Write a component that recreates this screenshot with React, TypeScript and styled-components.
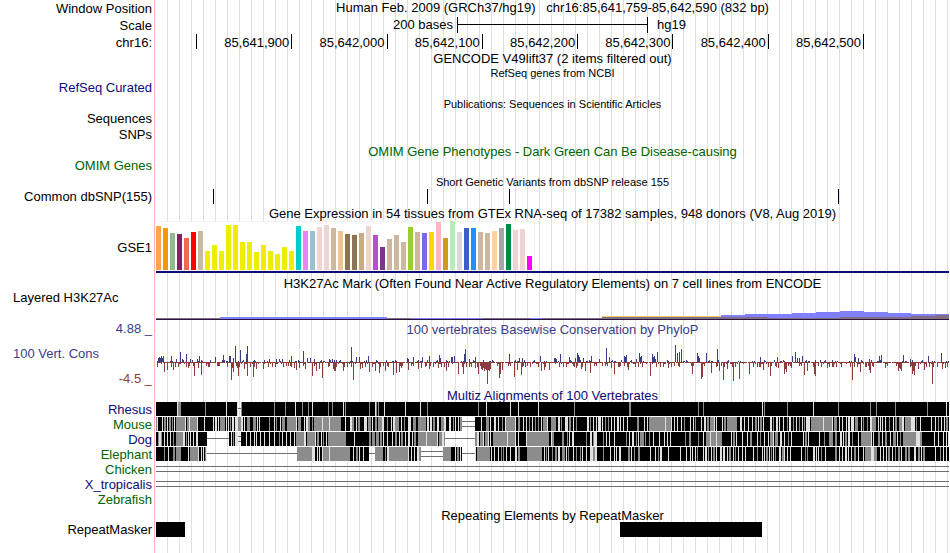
import React from "react";
import styled, { createGlobalStyle } from "styled-components";

const GlobalStyle = createGlobalStyle`
  * { box-sizing: border-box; }
  body {
    margin: 0;
    background: #fff;
    color: #000;
    font-family: "Liberation Sans", Arial, sans-serif;
    font-size: 13px;
  }
`;

const NAVY = "#0c0c78";
const GREEN = "#006400";
const BLUE = "#3c3c8c";
const RED = "#8c3c3c";

const Browser = styled.main`
  display: grid;
  grid-template-columns: 155px minmax(0, 1fr);
  grid-auto-rows: max-content;
  min-height: 100vh;
  overflow: hidden;
  background:
    linear-gradient(#ffb4b4, #ffb4b4) 154px 0 / 1px 100% no-repeat,
    repeating-linear-gradient(90deg, transparent 0 11px, #dcdcf8 11px 12px) 156px 0 / 100% 100% no-repeat;
`;

const Row = styled.section<{ $h: number }>`
  display: grid;
  grid-template-columns: subgrid;
  grid-column: 1 / -1;
  height: ${(p) => p.$h}px;
`;

const Label = styled.div<{ $color?: string; $left?: boolean; $top?: boolean }>`
  display: flex;
  align-items: center;
  align-self: ${(p) => (p.$top ? "start" : "stretch")};
  justify-content: ${(p) => (p.$left ? "flex-start" : "flex-end")};
  padding: ${(p) => (p.$left ? "0 0 0 13px" : "0 3px 0 0")};
  color: ${(p) => p.$color ?? "#000"};
  line-height: 14px;
  white-space: pre;
`;

const Track = styled.div`
  grid-column: 2;
  margin: 0 1px;
  min-width: 0;
`;

const Title = styled.h2<{ $color?: string; $small?: boolean; $h?: number }>`
  display: flex;
  align-items: center;
  justify-content: center;
  height: ${(p) => p.$h ?? 16}px;
  margin: 0;
  padding-top: 2px;
  color: ${(p) => p.$color ?? "#000"};
  font-size: ${(p) => (p.$small ? 11 : 13)}px;
  font-weight: 400;
  line-height: 14px;
  white-space: pre;
`;

const ScaleRow = styled.div`
  display: grid;
  grid-template-columns: 301fr 191fr 301fr;
  height: 16px;
  line-height: 15px;
`;

const ScaleStart = styled.span`
  padding-right: 4px;
  text-align: right;
`;

const ScaleEnd = styled.span`
  padding-left: 9px;
`;

const ScaleBar = styled.span`
  height: 16px;
  border: solid #000;
  border-width: 0 1px;
  background: linear-gradient(#000, #000) 0 7px / 100% 1px no-repeat;
`;

const Ruler = styled.div`
  display: grid;
  grid-template-columns: 287fr repeat(7, 667fr) 595fr;
  grid-template-rows: 15px;
`;

const RulerCell = styled.span`
  padding-right: 2px;
  border-right: 1px solid #000;
  line-height: 18px;
  text-align: right;
`;

const Drawing = styled.svg<{ $h: number }>`
  display: block;
  width: 100%;
  height: ${(p) => p.$h}px;
  shape-rendering: crispEdges;
`;

const Expression = styled.div`
  display: flex;
  flex-direction: column;
  height: 52px;
  border-bottom: 2px solid ${NAVY};
`;

const BarBox = styled.div`
  display: flex;
  align-items: flex-end;
  align-self: flex-start;
  gap: 2px;
  height: 50px;
  padding: 0 2px 0 0;
  border: solid #f3f3f3;
  border-width: 1px 1px 1px 0;
  background: #fff;
`;

const TissueBar = styled.span<{ $h: number; $c: string }>`
  width: 5px;
  height: ${(p) => p.$h}px;
  background: ${(p) => p.$c};
`;

const ConsLabels = styled.div`
  display: flex;
  flex-direction: column;
  justify-content: space-between;
  padding: 1px 0;
`;

const TAN = "#cdb79e";
const YEL = "#eeee00";
const PINK = "#eed5d2";

const tissues: [number, string][] = [
  [44, "#ffa54f"], [42, "#ee9a00"], [37, "#8fbc8f"], [36, "#8b1c62"], [32, "#ee6a50"], [38, "#ff0000"], [39, TAN],
  [19, YEL], [25, YEL], [19, YEL], [45, YEL], [45, YEL], [28, YEL], [28, YEL], [18, YEL], [25, YEL], [19, YEL],
  [16, YEL], [23, YEL], [19, YEL], [44, "#00cdcd"], [39, "#ee82ee"], [39, "#9ac0cd"], [43, PINK], [45, PINK],
  [42, TAN], [39, "#eec591"], [36, "#8b7355"], [35, "#8b7355"], [37, "#cdaa7d"], [44, PINK], [35, "#b452cd"],
  [23, "#7a378b"], [31, TAN], [35, TAN], [28, TAN], [43, "#9acd32"], [38, TAN], [37, "#7a67ee"], [38, "#ffd700"],
  [48, "#ffb6c1"], [32, "#cd9b1d"], [49, "#b4eeb4"], [38, "#d9d9d9"], [42, "#3a5fcd"], [42, "#1e90ff"], [38, TAN],
  [37, TAN], [39, "#ffd39b"], [42, "#a6a6a6"], [46, "#008b45"], [40, PINK], [41, PINK], [14, "#ff00ff"],
];

/* Every drawing uses a 793-unit wide canvas whose first column is 156. */
const X0 = 156;
const WIDTH = 793;

type Seg = [number, number, number, number, string];

const acetylation: Seg[] = [
  [156, 244, 318, 319, "#826e82"], [220, 387, 317, 319, "#8080ff"], [387, 411, 318, 319, "#826e82"],
  [411, 482, 318, 319, "#8080ff"], [482, 530, 318, 319, "#826e82"], [530, 542, 318, 319, "#8080ff"],
  [542, 602, 318, 319, "#826e82"], [602, 721, 316, 317, "#ffc864"], [602, 721, 317, 319, "#826e82"],
  [721, 745, 315, 319, "#8080ff"], [745, 792, 314, 319, "#8080ff"], [792, 816, 313, 319, "#8080ff"],
  [816, 840, 312, 319, "#8080ff"], [840, 864, 311, 319, "#8080ff"], [864, 888, 312, 319, "#8080ff"],
  [888, 911, 313, 319, "#8080ff"], [911, 949, 314, 319, "#8080ff"], [721, 768, 317, 319, "#826e82"],
  [768, 840, 318, 319, "#826e82"], [840, 911, 317, 319, "#826e82"], [911, 935, 316, 319, "#826e82"],
  [935, 949, 315, 319, "#826e82"], [156, 949, 319, 320, "#28143c"],
];

const conserved = `157:1 158:4 159:5 160:4 161:6 162:4 163:6 171:6 176:3 180:10 182:3 183:2 186:8 190:3 197:3 199:6 210:2
215:5 222:2 223:7 229:6 230:6 233:4 235:16 238:1 240:12 246:8 247:16 254:2 264:2 269:3 276:3 279:3 282:3 291:6 303:11
307:4 310:4 314:3 321:2 329:3 330:2 332:3 334:2 336:2 351:15 356:5 359:5 366:2 368:6 407:4 408:3 413:5 422:5 429:6
439:7 440:4 446:2 451:5 452:5 454:6 464:8 465:13 469:3 475:5 509:8 519:4 522:4 540:6 554:4 555:4 556:3 560:8 569:5
575:4 577:9 578:7 579:5 583:4 591:6 599:3 606:14 609:5 624:6 625:5 626:7 631:2 636:3 639:9 640:5 641:6 652:8 653:5
654:6 655:3 657:10 675:17 677:9 679:10 681:13 697:9 698:6 699:4 706:9 717:13 760:5 777:5 792:6 795:10 797:4 799:4
802:6 820:2 832:2 854:8 855:5 858:4 869:3 879:6 881:7 903:7 910:3 928:6 941:9`;

const accelerated = `164:9 167:7 173:7 186:4 188:5 194:13 198:5 201:12 208:4 209:4 218:3 227:4 231:17 232:5 233:9 237:5
238:13 244:6 247:13 253:14 256:6 263:6 275:4 288:3 294:5 296:7 299:5 305:6 312:13 316:8 319:6 322:15 333:6 334:8
335:8 343:8 353:17 360:6 362:5 369:9 375:8 379:10 385:8 393:12 396:10 399:9 401:5 408:7 418:6 421:5 429:6 438:5
446:8 458:11 463:11 471:4 475:5 478:11 481:6 482:7 483:5 484:8 485:6 486:7 487:21 488:7 489:8 490:6 499:15 500:11
502:7 514:14 517:7 521:12 525:4 541:8 544:7 549:7 573:3 576:5 581:6 585:8 590:10 602:3 611:5 614:11 618:4 628:7
638:4 650:13 668:5 692:11 701:16 702:14 711:10 719:8 723:17 727:6 733:18 739:16 749:11 759:4 763:7 770:13 778:5
784:11 785:6 786:9 791:5 804:12 807:8 814:11 815:13 827:5 833:4 841:4 852:17 860:9 866:4 869:7 870:10 885:5 898:8
899:5 900:6 901:8 912:11 913:8 914:12 918:6 924:7 932:21 937:4 942:6 945:5`;

const parsePeaks = (text: string) =>
  new Map(text.trim().split(/\s+/).map((p) => p.split(":").map(Number) as [number, number]));

/* Low-amplitude scores between the named peaks. */
const minorScore = (x: number) => ((x * x * 31 + x * 17) % 97) / 97;

function wigglePaths() {
  const up = parsePeaks(conserved);
  const down = parsePeaks(accelerated);
  let blue = "";
  let red = "";
  for (let x = X0 + 1; x < X0 + WIDTH; x++) {
    const n = minorScore(x);
    const u = up.get(x) ?? (n > 0.88 ? 2 : n > 0.74 ? 1 : 0);
    const d = down.get(x) ?? (n < 0.08 ? 4 : n < 0.18 ? 3 : n < 0.3 ? 1 : 0);
    if (u) blue += `M${x - X0} 25v${-u}h1v${u}z`;
    if (d || !(x % 9 === 0)) red += `M${x - X0} 25v${d + 1}h1v${-d - 1}z`;
  }
  return { blue, red };
}
const wiggle = wigglePaths();

type Gap = [number, number, 1 | 2];
interface Species { name: string; color: string; marks: string; gaps: Gap[]; }

const species: Species[] = [
  {
    name: "Rhesus", color: NAVY, gaps: [[238, 241, 1]],
    marks: `177w1 178g3 205g1 226w1 237w1 241g1 274g1 285g1 295w1 302g1 308g1 312w1 328g1 332g1 343w1 345g1 369g1 375w1
    376g1 378g1 384w1 405w1 420w1 427g1 478g1 486w1 510w1 518w1 538w1 574g1 629g2 698g1 703g1 762w1 764g1 787g1 813w1
    838g1 870g1 876g1 895g1 927g1 946w1`,
  },
  {
    name: "Mouse", color: GREEN, gaps: [[462, 475, 2]],
    marks: `156g1 157w1 162w1 164g2 167w1 169g2 172g1 174w1 176g9 185w1 187g2 189w1 190g7 197w1 204w1 213w1 215w2 218w1
    220g5 226w1 228w1 230g1 232w2 235w3 238g3 241w2 244w1 247g3 253g3 257w1 259w1 269g1 274w1 276g1 280w1 282g3 287g9
    296w1 298g3 304w1 306w2 308g2 312g1 314g27 322w1 329w1 345w1 350w2 352g2 356w1 358g2 364w2 366w1 368g3 372w1
    375g2 378g4 382w2 387g1 391w1 393w2 395g4 401w1 404g1 408w2 410w1 413g3 418g8 427w2 430w2 433g2 437w2 441g3
    444w2 449w2 453g1 455w1 458w1 460g2 481w1 486g3 490w1 494w2 498w1 502g1 505w1 506g9 515w1 518g2 523w1 526w1 529g1
    532w1 535g1 538g1 541w1 543g4 547w1 551g2 553g3 558w2 561g1 565w3 569g2 573w1 576g1 587w2 590g1 593w1 596w1 598w3
    602w1 605g1 608g1 611w1 614w1 617w2 620w1 623w1 627w1 637g2 644w1 647w1 649g6 655g10 665w1 666g5 671w1 674w1
    677w1 681w1 684g1 690w1 693w1 695g1 701w1 704w2 707g2 710g4 714w1 716w1 722w1 724g2 727g10 740w2 744w1 748w1
    752w1 755g2 758w1 760g2 763w1 770w2 773g1 776w2 779w1 783w1 787g1 789w2 793g1 796w1 799g1 802w1 804g1 806w4
    811g12 823w1 824g8 832w1 834g3 839w1 842w1 846w1 848w2 851w3 855g3 861w1 863g1 867g1 870w2 872g4 878w1 880w1
    882w1 885w1 889g1 893w1 895g2 899g3 902w2 905g6 911w1 912w3 916g1 920w1 931w1 935w1 938g1 941w1 944w1 946g2`,
  },
  {
    name: "Dog", color: NAVY, gaps: [[207, 229, 1], [238, 241, 2], [445, 475, 1]],
    marks: `158g1 159w2 161g1 164w1 167w1 170w1 173g1 176g7 183w2 186g1 188w1 190w1 193w1 196w2 231w1 233g1 235w3
    246w1 250w1 254w1 256w1 260w1 264w1 269w1 274w1 279g1 282w1 286w1 290w1 294w1 296g8 304w2 307g8 315w1 317g2
    321w1 323g1 326w1 328g18 354w1 369g2 372g3 376g3 380g2 383w1 387w1 392w1 395g2 399w1 401g2 405w1 408w2 412w1
    414g2 418g8 426w1 427g10 437w1 439g3 442w2 444g1 475g2 477w2 480g3 483w1 485g3 488w1 490w1 493g22 507w1 515w1
    518w1 526w1 527g22 551w1 552g2 562g2 567g1 569w1 572w2 586g1 590w2 593g2 594w3 603g1 606w1 609w1 614w1 626g1
    629w1 632w2 636g1 638w1 640g4 645g1 649g1 653w1 659w1 664w1 667w1 670w1 685g1 689g2 698g1 703w1 706g16 710w1
    716w1 731w1 733g2 736w1 742w1 747w1 750g2 757w1 760g1 764w1 768w1 770g3 773w1 775g3 780w2 784w1 788g1 791w1
    803w1 805g2 808w1 819w1 824g1 829g4 835g2 840w2 843w1 845g2 848w2 852g1 858w1 861g10 871w1 873w1 878g2 882w1
    885g2 890w1 893g3 897w1 900g1 903g2 905g11 916w4 920g2 934w1 938w1 943w1 946w1 948w1`,
  },
  {
    name: "Elephant", color: GREEN,
    gaps: [[207, 297, 1], [369, 375, 1], [421, 443, 2], [462, 475, 1]],
    marks: `164g1 168w1 173g2 176g5 188w1 190g8 198w1 201w1 203w1 205g1 206w1 297g15 312w2 314w1 317w1 319w1 322w1
    323g6 329w1 330g20 353w1 356g2 359w1 363w1 375g8 385g1 387w2 389g19 408w1 411w1 414w1 417w2 419g2 443g8 455w1
    457g2 460w1 475w1 477g13 491w1 494w1 498w1 501g1 503g1 506w1 510w1 515w2 518g2 527g15 544w1 546g1 548w1 552g1
    555g2 558w2 562g3 566w1 568g1 573w1 576g1 580g1 582w1 586w1 590w3 593g2 595w2 603g1 610w1 614w1 616w1 619w2
    628g2 631w1 634g1 638g2 650w1 655w1 658g1 660w2 668w1 680w1 686w1 690w1 692w1 695w1 697g1 703w1 705w2 708g1
    711w1 713g2 716w1 720w2 723w2 727w1 729g2 733w1 735g1 738w1 742w1 745w1 753w1 757g1 762w1 764w1 766g2 769w1
    771g1 773w1 775g1 779w2 782g2 784w1 787w1 790w1 801w1 805g1 807g1 813w2 816w1 818w1 821g1 825w1 835g2 839w1
    842w1 845w2 848w1 851w1 854g2 858w1 863w1 865g6 871w3 874g3 880w1 883w1 886w1 888g2 892w1 895g1 898g2 901w1
    905g2 908g2 914w2 918g2 921w1 923g2 935w1 940g1 943w1 946w1`,
  },
  { name: "Chicken", color: GREEN, marks: "", gaps: [[156, 949, 2]] },
  { name: "X_tropicalis", color: NAVY, marks: "", gaps: [[156, 949, 2]] },
];

function Alignment({ marks, gaps }: { marks: string; gaps: Gap[] }) {
  let covered = X0;
  const blocks: [number, number][] = [];
  for (const [a, b] of gaps) {
    if (a > covered) blocks.push([covered, a]);
    covered = b;
  }
  if (covered < X0 + WIDTH) blocks.push([covered, X0 + WIDTH]);
  const items = [...marks.matchAll(/(\d+)([gw])(\d+)/g)];
  return (
    <Drawing $h={15} viewBox={`0 0 ${WIDTH} 15`} preserveAspectRatio="none" aria-hidden="true">
      {blocks.map(([a, b]) => (
        <rect key={a} x={a - X0} y={0} width={b - a} height={14} fill="#000" />
      ))}
      {blocks.map(([a, b]) => (
        <rect key={`s${a}`} x={a - X0} y={14} width={b - a} height={1} fill="#fff" />
      ))}
      {items.map((m) => (
        <rect key={m[0]} x={Number(m[1]) - X0} y={0} width={Number(m[3])} height={14}
          fill={m[2] === "g" ? "#8c8c8c" : "#e1e1e1"} />
      ))}
      {gaps.map(([a, b, n]) =>
        (n === 1 ? [6] : [4, 9]).map((y) => (
          <rect key={`${a}-${y}`} x={a - X0} y={y} width={b - a} height={1} fill="#6e6e6e" />
        )),
      )}
    </Drawing>
  );
}

interface TitleRowProps { h: number; color?: string; small?: boolean; children: React.ReactNode; }
function TitleRow({ h, color, small, children }: TitleRowProps) {
  return (
    <Row $h={h}>
      <Track>
        <Title $h={h} $color={color} $small={small}>{children}</Title>
      </Track>
    </Row>
  );
}

function LabelRow({ h, color, children }: { h: number; color?: string; children: React.ReactNode }) {
  return (
    <Row $h={h}>
      <Label $color={color}>{children}</Label>
    </Row>
  );
}

const positions = ["", "85,641,900", "85,642,000", "85,642,100", "85,642,200", "85,642,300", "85,642,400", "85,642,500"];

export default function App() {
  return (
    <>
      <GlobalStyle />
      <Browser>
        <Row $h={17}>
          <Label>Window Position</Label>
          <Track>
            <Title $h={14}>{"Human Feb. 2009 (GRCh37/hg19)   chr16:85,641,759-85,642,590 (832 bp)"}</Title>
          </Track>
        </Row>
        <Row $h={17}>
          <Label>Scale</Label>
          <Track>
            <ScaleRow>
              <ScaleStart>200 bases</ScaleStart>
              <ScaleBar />
              <ScaleEnd>hg19</ScaleEnd>
            </ScaleRow>
          </Track>
        </Row>
        <Row $h={17}>
          <Label>chr16:</Label>
          <Track>
            <Ruler>
              {positions.map((p) => <RulerCell key={p}>{p}</RulerCell>)}
            </Ruler>
          </Track>
        </Row>
        <TitleRow h={13}>GENCODE V49lift37 (2 items filtered out)</TitleRow>
        <TitleRow h={16} small>RefSeq genes from NCBI</TitleRow>
        <LabelRow h={15} color={NAVY}>RefSeq Curated</LabelRow>
        <TitleRow h={15} small>Publications: Sequences in Scientific Articles</TitleRow>
        <LabelRow h={17}>Sequences</LabelRow>
        <LabelRow h={16}>SNPs</LabelRow>
        <TitleRow h={16} color={GREEN}>OMIM Gene Phenotypes - Dark Green Can Be Disease-causing</TitleRow>
        <LabelRow h={14} color={GREEN}>OMIM Genes</LabelRow>
        <TitleRow h={16} small>Short Genetic Variants from dbSNP release 155</TitleRow>
        <Row $h={16}>
          <Label>Common dbSNP(155)</Label>
          <Track>
            <Drawing $h={15} viewBox={`0 0 ${WIDTH} 15`} preserveAspectRatio="none" aria-hidden="true">
              {[213, 427, 509, 838].map((x) => <rect key={x} x={x - X0} y={0} width={1} height={15} />)}
            </Drawing>
          </Track>
        </Row>
        <TitleRow h={16}>
          Gene Expression in 54 tissues from GTEx RNA-seq of 17382 samples, 948 donors (V8, Aug 2019)
        </TitleRow>
        <Row $h={54}>
          <Label>GSE1</Label>
          <Track>
            <Expression>
              <BarBox>
                {tissues.map(([h, c], i) => <TissueBar key={i} $h={h} $c={c} />)}
              </BarBox>
            </Expression>
          </Track>
        </Row>
        <TitleRow h={16}>
          H3K27Ac Mark (Often Found Near Active Regulatory Elements) on 7 cell lines from ENCODE
        </TitleRow>
        <Row $h={30}>
          <Label $left $top>Layered H3K27Ac</Label>
          <Track>
            <Drawing $h={29} viewBox={`0 291 ${WIDTH} 29`} preserveAspectRatio="none" aria-hidden="true">
              {acetylation.map(([a, b, t, e, c], i) => (
                <rect key={i} x={a - X0} y={t} width={b - a} height={e - t} fill={c} />
              ))}
            </Drawing>
          </Track>
        </Row>
        <Row $h={66}>
          <ConsLabels>
            <Label $color={BLUE}>4.88 _</Label>
            <Label $color={BLUE} $left>100 Vert. Cons</Label>
            <Label $color={RED}>-4.5 _</Label>
          </ConsLabels>
          <Track>
            <Title $color={BLUE}>100 vertebrates Basewise Conservation by PhyloP</Title>
            <Drawing $h={50} viewBox={`0 0 ${WIDTH} 50`} preserveAspectRatio="none" aria-hidden="true">
              <path d={wiggle.blue} fill={BLUE} />
              <path d={wiggle.red} fill={RED} />
            </Drawing>
          </Track>
        </Row>
        <TitleRow h={15} color={NAVY}>Multiz Alignments of 100 Vertebrates</TitleRow>
        {species.map((s) => (
          <Row key={s.name} $h={15}>
            <Label $color={s.color}>{s.name}</Label>
            <Track>
              <Alignment marks={s.marks} gaps={s.gaps} />
            </Track>
          </Row>
        ))}
        <LabelRow h={15} color={GREEN}>Zebrafish</LabelRow>
        <TitleRow h={15}>Repeating Elements by RepeatMasker</TitleRow>
        <Row $h={15}>
          <Label>RepeatMasker</Label>
          <Track>
            <Drawing $h={15} viewBox={`0 0 ${WIDTH} 15`} preserveAspectRatio="none" aria-hidden="true">
              <rect x={0} y={0} width={29} height={15} />
              <rect x={464} y={0} width={142} height={15} />
            </Drawing>
          </Track>
        </Row>
      </Browser>
    </>
  );
}
